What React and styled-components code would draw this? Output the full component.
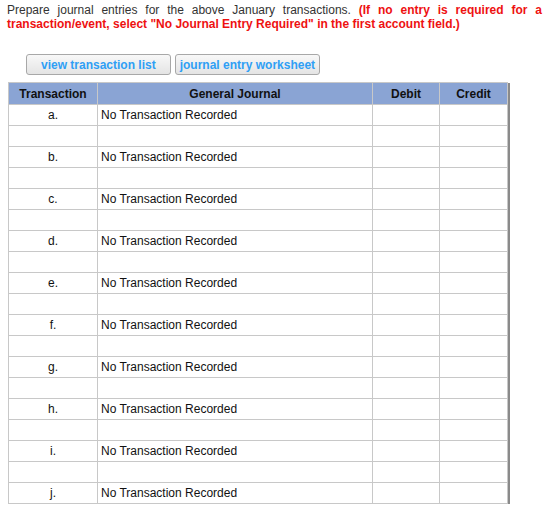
import React from 'react';
import styled, { createGlobalStyle } from 'styled-components';

const GlobalStyle = createGlobalStyle`
  body {
    margin: 0;
    background: #fff;
    font-family: Arial, "Liberation Sans", sans-serif;
    font-size: 12px;
    color: #333;
  }
`;

const Page = styled.div`
  width: 549px;
  padding: 3px 7px 0 7px;
  box-sizing: border-box;
`;

const Intro = styled.p`
  margin: 0;
  line-height: 14px;
  text-align: justify;
  color: #333;
`;

const Warn = styled.strong`
  color: #ee1111;
  font-weight: bold;
`;

const Toolbar = styled.div`
  display: flex;
  gap: 4px;
  margin: 23px 0 0 19px;
`;

const Button = styled.button`
  font-family: Arial, "Liberation Sans", sans-serif;
  font-size: 12px;
  font-weight: bold;
  color: #2f9ff5;
  height: 21px;
  padding: 0 ${p => p.$pad}px;
  border: 1px solid #a8a8a8;
  border-radius: 3px;
  background: linear-gradient(#f8f8f8, #e4e4e4);
  cursor: pointer;
`;

const Table = styled.table`
  margin: 7px 0 0 1px;
  width: 499px;
  border-collapse: collapse;
  box-shadow: 2px 1px 0 #8a8a8a;
  table-layout: fixed;
`;

const Th = styled.th`
  background: #8aa4d4;
  color: #111;
  font-weight: bold;
  height: 21px;
  padding: 0;
  border: 1px solid #c8c8c8;
  text-align: center;
`;

const Td = styled.td`
  height: 20px;
  padding: 0 3px;
  border: 1px solid #c8c8c8;
  text-align: ${p => p.$center ? 'center' : 'left'};
  color: #111;
`;

const letters = ['a', 'b', 'c', 'd', 'e', 'f', 'g', 'h', 'i', 'j'];

export default function App() {
  return (
    <Page>
      <GlobalStyle />
      <Intro>
        Prepare journal entries for the above January transactions.{' '}
        <Warn>
          (If no entry is required for a transaction/event, select "No Journal Entry Required" in the first account field.)
        </Warn>
      </Intro>
      <Toolbar>
        <Button $pad={14}>view transaction list</Button>
        <Button $pad={4}>journal entry worksheet</Button>
      </Toolbar>
      <Table>
        <colgroup>
          <col style={{ width: 89 }} />
          <col style={{ width: 275 }} />
          <col style={{ width: 67 }} />
          <col style={{ width: 68 }} />
        </colgroup>
        <thead>
          <tr>
            <Th>Transaction</Th>
            <Th>General Journal</Th>
            <Th>Debit</Th>
            <Th>Credit</Th>
          </tr>
        </thead>
        <tbody>
          {letters.map((l, i) => (
            <React.Fragment key={l}>
              <tr>
                <Td $center>{l}.</Td>
                <Td>No Transaction Recorded</Td>
                <Td />
                <Td />
              </tr>
              {i < letters.length - 1 && (
                <tr>
                  <Td />
                  <Td />
                  <Td />
                  <Td />
                </tr>
              )}
            </React.Fragment>
          ))}
        </tbody>
      </Table>
    </Page>
  );
}
